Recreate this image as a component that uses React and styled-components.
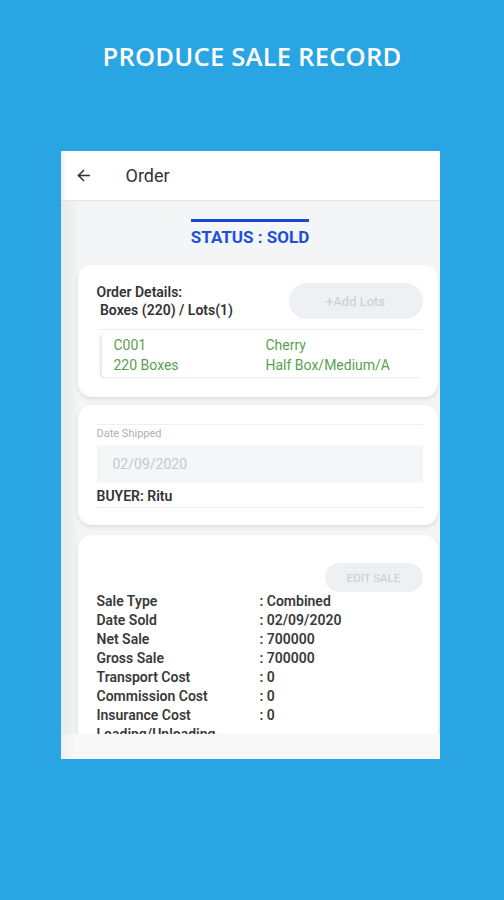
import React from "react";
import styled, { createGlobalStyle } from "styled-components";

const GlobalStyle = createGlobalStyle`
  html, body {
    margin: 0;
    padding: 0;
    background: #29a5e4;
  }
  * {
    box-sizing: border-box;
  }
`;

const Page = styled.div`
  width: 100%;
  height: 900px;
  display: flex;
  flex-direction: column;
  align-items: center;
  padding-top: 38px;
  background: #29a5e4;
`;

const Title = styled.h1`
  margin: 0;
  font-family: "Open Sans", "Noto Sans", sans-serif;
  font-weight: 600;
  font-size: 25.6px;
  line-height: 38px;
  color: #fff;
  letter-spacing: 0.2px;
`;

const Phone = styled.div`
  margin-top: 75px;
  margin-right: 4px;
  width: 379px;
  height: 608px;
  display: flex;
  flex-direction: column;
  background: #f4f5f7;
  overflow: hidden;
  font-family: Roboto, "Liberation Sans", sans-serif;
`;

const AppBar = styled.div`
  height: 50px;
  flex-shrink: 0;
  display: flex;
  align-items: center;
  padding-left: 14px;
  background: linear-gradient(90deg, #eeeeef 0px, #fff 6px);
  border-bottom: 1px solid #e3e4e6;
  box-shadow: 0 1px 3px rgba(0, 0, 0, 0.06);
`;

const BackButton = styled.div`
  width: 18px;
  height: 18px;
  display: flex;
  align-items: center;
  justify-content: center;
  color: #333;
`;

const AppTitle = styled.div`
  margin-left: 33px;
  font-size: 18px;
  color: #333;
`;

const Content = styled.div`
  flex: 1;
  overflow: hidden;
  display: flex;
  flex-direction: column;
  background: linear-gradient(90deg, #e9eaec 0px, #eff0f2 12px, #f4f5f7 17px);
`;

const StatusWrap = styled.div`
  height: 64px;
  flex-shrink: 0;
  display: flex;
  flex-direction: column;
  align-items: center;
  padding-top: 18px;
`;

const StatusBar = styled.div`
  width: 118px;
  height: 3px;
  background: #1948d4;
`;

const StatusText = styled.div`
  margin-top: 5px;
  font-size: 17px;
  font-weight: 700;
  color: #1d4fd8;
`;

const Cards = styled.div`
  display: flex;
  flex-direction: column;
  padding: 0 2px 0 17px;
`;

const Card = styled.div`
  background: #fff;
  border-radius: 14px;
  box-shadow: 0 2px 4px rgba(0, 0, 0, 0.1);
  padding: ${(p) => p.$pad};
  margin-bottom: ${(p) => p.$gap || 0}px;
`;

const DetailsHead = styled.div`
  display: flex;
  justify-content: space-between;
  align-items: center;
`;

const BoldText = styled.div`
  font-size: 14px;
  font-weight: 600;
  line-height: 18px;
  color: #333;
  margin-top: ${(p) => p.$mt || 0}px;
`;

const PillButton = styled.div`
  width: ${(p) => p.$w}px;
  height: ${(p) => p.$h}px;
  border-radius: 999px;
  background: #eef0f3;
  color: #c9ccd1;
  font-size: ${(p) => p.$fs}px;
  display: flex;
  align-items: center;
  justify-content: center;
`;

const Divider = styled.div`
  height: 1px;
  background: #eeeff1;
  margin: ${(p) => p.$m};
`;

const LotBox = styled.div`
  margin-left: 5px;
  height: 44px;
  display: grid;
  grid-template-columns: 152px 1fr;
  align-content: center;
  padding-left: 12px;
  border-radius: 4px;
  box-shadow: -2px 1px 3px rgba(0, 0, 0, 0.1);
`;

const GreenText = styled.div`
  font-size: 14px;
  line-height: 20px;
  color: #5a9f4c;
`;

const SmallLabel = styled.div`
  font-size: 11px;
  line-height: 13px;
  color: #b0b0b0;
`;

const DateInput = styled.div`
  margin-top: 5px;
  height: 38px;
  background: #f5f6f8;
  border-radius: 2px;
  display: flex;
  align-items: center;
  padding-left: 16px;
  font-size: 14px;
  color: #c6c8cc;
`;

const ButtonRow = styled.div`
  display: flex;
  justify-content: flex-end;
`;

const InfoGrid = styled.div`
  display: grid;
  grid-template-columns: 163px 1fr;
`;

const InfoCell = styled.div`
  font-size: 14px;
  font-weight: 600;
  line-height: 19px;
  color: #3a3a3a;
  white-space: nowrap;
`;

const Footer = styled.div`
  height: 25px;
  flex-shrink: 0;
  background: linear-gradient(90deg, #efeff0 0px, #f8f8f9 14px);
`;

const rows = [
  ["Sale Type", ": Combined"],
  ["Date Sold", ": 02/09/2020"],
  ["Net Sale", ": 700000"],
  ["Gross Sale", ": 700000"],
  ["Transport Cost", ": 0"],
  ["Commission Cost", ": 0"],
  ["Insurance Cost", ": 0"],
  ["Loading/Unloading", ""],
];

export default function App() {
  return (
    <>
      <GlobalStyle />
      <Page>
        <Title>PRODUCE SALE RECORD</Title>
        <Phone>
          <AppBar>
            <BackButton>
              <svg width="17" height="17" viewBox="0 0 24 24" fill="none" stroke="#333" strokeWidth="2.2" strokeLinecap="square">
                <path d="M20 12H5" />
                <path d="M12 5l-7 7 7 7" />
              </svg>
            </BackButton>
            <AppTitle>Order</AppTitle>
          </AppBar>
          <Content>
            <StatusWrap>
              <StatusBar />
              <StatusText>STATUS : SOLD</StatusText>
            </StatusWrap>
            <Cards>
              <Card $pad="18px 15px 20px 19px" $gap={8}>
                <DetailsHead>
                  <div>
                    <BoldText>Order Details:</BoldText>
                    <BoldText>&nbsp;Boxes (220) / Lots(1)</BoldText>
                  </div>
                  <PillButton $w={134} $h={36} $fs={13}>+Add Lots</PillButton>
                </DetailsHead>
                <Divider $m="10px 0 3px 0" />
                <LotBox>
                  <GreenText>C001</GreenText>
                  <GreenText>Cherry</GreenText>
                  <GreenText>220 Boxes</GreenText>
                  <GreenText>Half Box/Medium/A</GreenText>
                </LotBox>
              </Card>
              <Card $pad="19px 15px 17px 19px" $gap={10}>
                <Divider $m="0 0 2px 0" />
                <SmallLabel>Date Shipped</SmallLabel>
                <DateInput>02/09/2020</DateInput>
                <BoldText $mt={4}>BUYER: Ritu</BoldText>
                <Divider $m="2px 0 0 0" />
              </Card>
              <Card $pad="28px 15px 20px 19px">
                <ButtonRow>
                  <PillButton $w={98} $h={29} $fs={11.5}>EDIT SALE</PillButton>
                </ButtonRow>
                <InfoGrid>
                  {rows.map(([k, v]) => (
                    <React.Fragment key={k}>
                      <InfoCell>{k}</InfoCell>
                      <InfoCell>{v}</InfoCell>
                    </React.Fragment>
                  ))}
                </InfoGrid>
              </Card>
            </Cards>
          </Content>
          <Footer />
        </Phone>
      </Page>
    </>
  );
}
